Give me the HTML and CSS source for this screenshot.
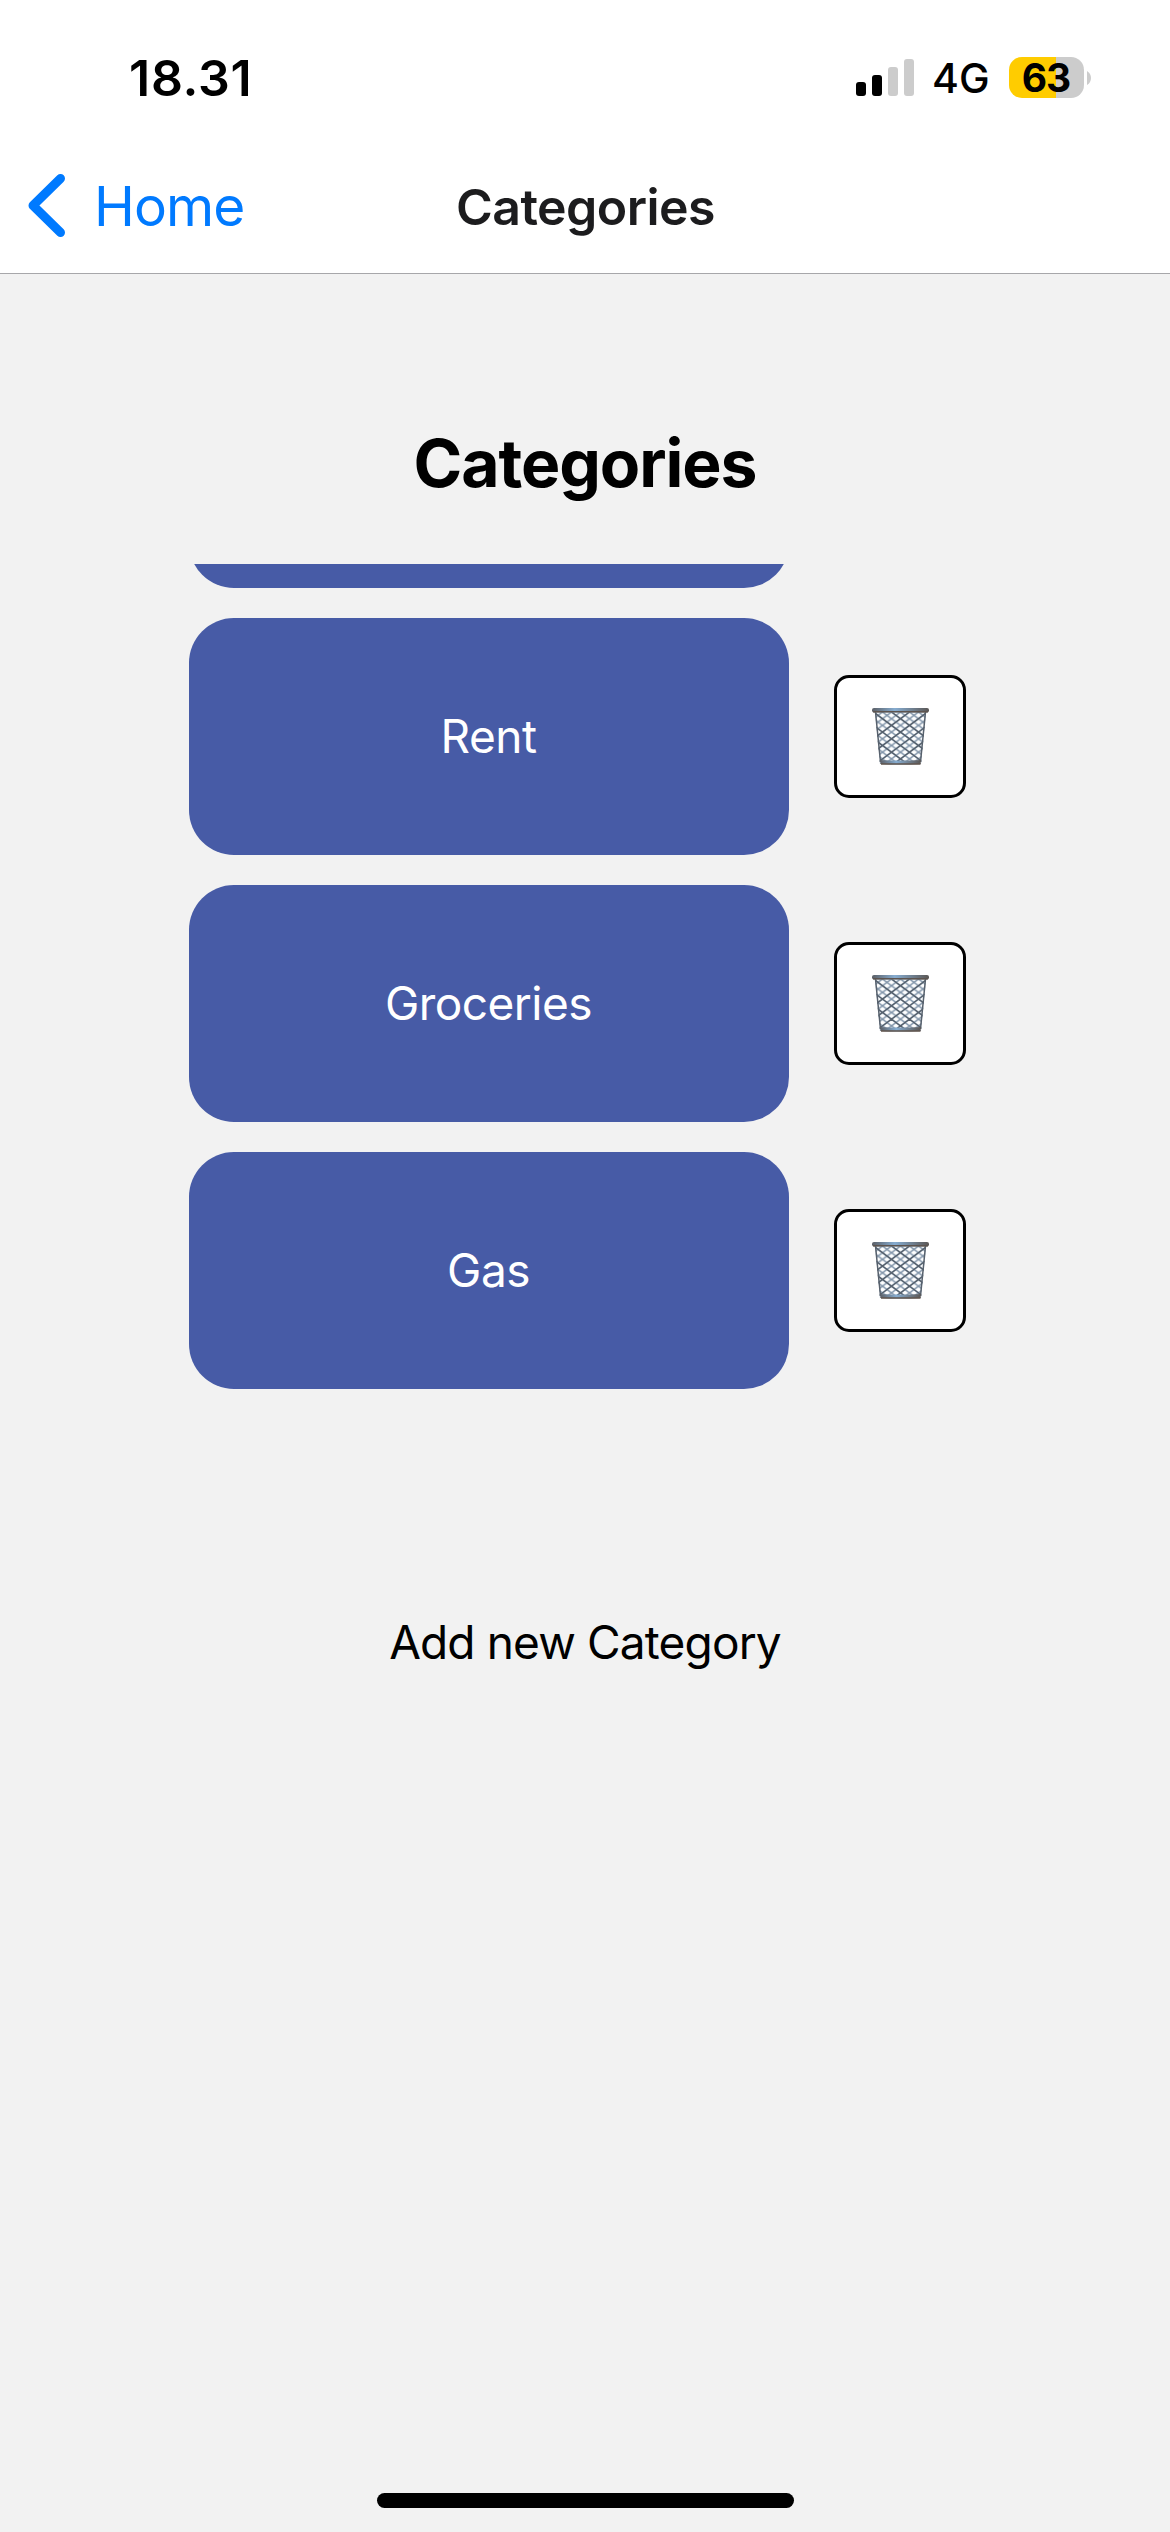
FILE: index.html
```html
<!DOCTYPE html>
<html lang="en">
<head>
<meta charset="utf-8">
<title>Categories</title>
<link rel="stylesheet" href="styles.css">
</head>
<body>
<svg class="defs" width="0" height="0" aria-hidden="true">
  <defs>
    <linearGradient id="rim" x1="0" y1="0" x2="1" y2="0">
      <stop offset="0" stop-color="#5b5f66"/><stop offset=".4" stop-color="#86acd0"/><stop offset="1" stop-color="#5a5654"/>
    </linearGradient>
    <pattern id="mesh" width="9" height="6.7" patternUnits="userSpaceOnUse" x="1.5" y="4">
      <path d="M-1 -.75L10 7.450M10 -.75L-1 7.450" stroke="#8195aa" stroke-width="1.500" fill="none"/>
    </pattern>
    <clipPath id="bucket"><path d="M3 4H54L49 56H8Z"/></clipPath>
    <symbol id="basket" viewBox="0 0 57 57">
      <g clip-path="url(#bucket)" fill="none">
        <rect width="57" height="57" fill="url(#mesh)"/>
        <path stroke="#55606c" stroke-width="1.300" d="M1.500 4L55.500 44.200M1.500 17.400L55.500 57.600M19.500 4L64.500 37.500M1.500 30.800L37.500 57.600M55.500 4L1.500 44.200M55.500 17.400L1.500 57.600M37.500 4L-7.500 37.500M55.500 30.800L19.500 57.600"/>
      </g>
      <path d="M3.500 4L8.500 54M53.500 4L48.500 54" stroke="#57616d" stroke-width="1.500" fill="none"/>
      <path d="M8 52Q28 53 49 52L48.500 56Q28 57 8.500 56Z" fill="url(#rim)"/>
      <path d="M9 56H48.500" stroke="#60544d" stroke-width="1.300"/>
      <rect x="0" y="0" width="57" height="4.500" rx="2" fill="url(#rim)"/>
      <path d="M1 3.700H56" stroke="#5d544f" stroke-width="1.500"/>
    </symbol>
  </defs>
</svg>
<div class="screen">
  <header class="header">
    <div class="status">
      <span class="time">18.31</span>
      <div class="indicators">
        <svg class="signal" width="58" height="37" viewBox="0 0 58 37">
          <rect x="0" y="23" width="10" height="14" rx="3"/>
          <rect x="16" y="16" width="10" height="21" rx="3"/>
          <rect x="32" y="8" width="10" height="29" rx="3" fill="#ccc"/>
          <rect x="48" y="0" width="10" height="37" rx="3" fill="#ccc"/>
        </svg>
        <span class="network">4G</span>
        <span class="battery">63</span>
        <svg class="nub" width="4" height="14" viewBox="0 0 4 14"><path d="M0 0Q4 2.500 4 7T0 14Z" fill="#ccc"/></svg>
      </div>
    </div>
    <nav class="nav">
      <a class="back">
        <svg width="37" height="63" viewBox="0 0 37 63"><path d="M32.500 4.500L5 31.500L32.500 58.500" fill="none" stroke="#007aff" stroke-width="9" stroke-linecap="round" stroke-linejoin="round"/></svg>
        <span class="back-label">Home</span>
      </a>
      <span class="nav-title">Categories</span>
    </nav>
  </header>
  <main class="main">
    <h1 class="title">Categories</h1>
    <div class="list">
      <div class="row"><div class="card"></div></div>
      <div class="row"><div class="card">Rent</div><button class="delete"><svg width="57" height="57"><use href="#basket"/></svg></button></div>
      <div class="row"><div class="card">Groceries</div><button class="delete"><svg width="57" height="57"><use href="#basket"/></svg></button></div>
      <div class="row"><div class="card">Gas</div><button class="delete"><svg width="57" height="57"><use href="#basket"/></svg></button></div>
    </div>
    <div class="add">Add new Category</div>
  </main>
  <div class="home-indicator"></div>
</div>
</body>
</html>
```
FILE: styles.css
```css
* { box-sizing: border-box; }
body { margin: 0; font-family: Inter, "Liberation Sans", sans-serif; color: #000; }
.defs { display: block; }
.screen { width: 1170px; height: 2532px; display: flex; flex-direction: column; background: #f2f2f2; overflow: hidden; }
.header { height: 274px; background: #fff; border-bottom: 1px solid #a7a7aa; }
.status { height: 141px; padding: 14px 79px 0 129px; display: flex; align-items: center; justify-content: space-between; }
.time { font-size: 50px; font-weight: 600; letter-spacing: 0.75px; }
.indicators { display: flex; align-items: center; }
.network { width: 56px; margin-left: 18px; font-size: 41px; font-weight: 500; white-space: nowrap; }
.battery { width: 75px; height: 41px; margin-left: 21px; padding-right: 1px; border-radius: 13px; background: linear-gradient(to right, #ffcc00 47px, #ccc 47px); font-size: 39px; line-height: 41px; font-weight: 700; letter-spacing: -1px; text-align: center; }
.nub { margin-left: 3px; }
.nav { height: 132px; display: grid; grid-template-columns: 1fr auto 1fr; align-items: center; }
.back { display: flex; align-items: center; gap: 29px; padding: 0 0 3px 28px; color: #007aff; }
.back-label { font-size: 55px; line-height: 60px; letter-spacing: -0.9px; }
.nav-title { padding-left: 1px; font-size: 50px; font-weight: 600; letter-spacing: -0.55px; color: #1c1c1e; }
.main { flex: 1; padding-top: 149px; display: flex; flex-direction: column; }
.title { margin: 0 0 61px; font-size: 66px; line-height: 80px; font-weight: 700; letter-spacing: -1.08px; text-align: center; }
.list { height: 855px; padding-bottom: 30px; display: flex; flex-direction: column; justify-content: flex-end; gap: 30px; overflow: hidden; }
.row { flex: none; display: flex; align-items: center; gap: 45px; padding-left: 189px; }
.card { width: 600px; height: 237px; padding: 0 1px 1px 0; border-radius: 45px; background: #475ba6; color: #fff; display: flex; align-items: center; justify-content: center; font-size: 46px; letter-spacing: -0.55px; }
.delete { width: 132px; height: 123px; padding: 0; border: 3px solid #000; border-radius: 15px; background: #fff; display: flex; align-items: center; justify-content: center; }
.add { margin-top: 193px; font-size: 46px; line-height: 60px; letter-spacing: -0.85px; text-align: center; }
.home-indicator { width: 417px; height: 15px; margin: 0 auto 24px; border-radius: 8px; background: #000; }
```
